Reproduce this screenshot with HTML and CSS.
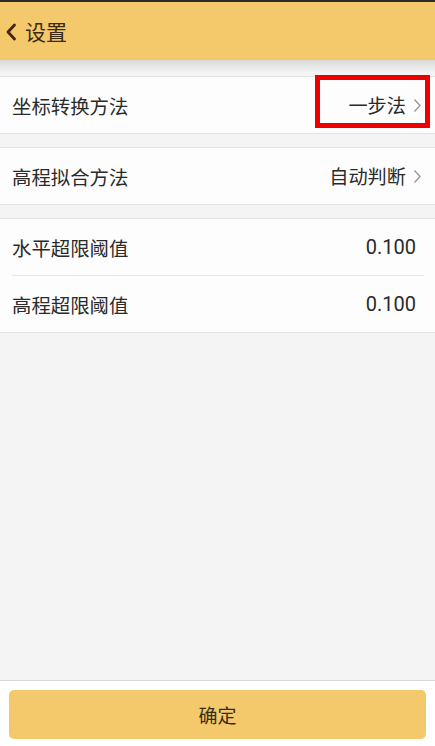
FILE: index.html
```html
<!DOCTYPE html>
<html lang="zh">
<head>
<meta charset="utf-8">
<title>设置</title>
<link rel="stylesheet" href="styles.css">
</head>
<body>
<div class="page">
  <header class="header">
    <svg class="back" width="12" height="18" viewBox="0 0 12 18"><path d="M9.5 2 L3 9 L9.5 16" fill="none" stroke="#4a2608" stroke-width="2.8" stroke-linecap="round" stroke-linejoin="round"/></svg>
    <span class="title">设置</span>
  </header>
  <div class="shade"></div>
  <main class="content">
    <section class="group">
      <div class="row">
        <span class="label">坐标转换方法</span>
        <span class="value">一步法<svg class="chev" width="9" height="15" viewBox="0 0 9 15"><path d="M1.5 1.5 L7 7.5 L1.5 13.5" fill="none" stroke="#9a9a9a" stroke-width="1.4"/></svg></span>
        <div class="mark"></div>
      </div>
    </section>
    <section class="group">
      <div class="row">
        <span class="label">高程拟合方法</span>
        <span class="value">自动判断<svg class="chev" width="9" height="15" viewBox="0 0 9 15"><path d="M1.5 1.5 L7 7.5 L1.5 13.5" fill="none" stroke="#9a9a9a" stroke-width="1.4"/></svg></span>
      </div>
    </section>
    <section class="group">
      <div class="row">
        <span class="label">水平超限阈值</span>
        <span class="value num">0.100</span>
      </div>
      <div class="divider"></div>
      <div class="row">
        <span class="label">高程超限阈值</span>
        <span class="value num">0.100</span>
      </div>
    </section>
  </main>
  <footer class="footer">
    <button class="ok">确定</button>
  </footer>
</div>
</body>
</html>
```
FILE: styles.css
```css
html, body {
  margin: 0;
  padding: 0;
}
body {
  font-family: "Noto Sans CJK SC", "Noto Sans", sans-serif;
  background: #f4f4f4;
  color: #333;
}
.page {
  width: 435px;
  height: 746px;
  display: flex;
  flex-direction: column;
  overflow: hidden;
}
.header {
  height: 58px;
  border-top: 2px solid #2b2b2b;
  background: #f3c96c;
  display: flex;
  align-items: center;
  padding-left: 5px;
  gap: 8px;
}
.back {
  margin-top: 1px;
}
.title {
  font-size: 21px;
  color: #3a2a12;
  line-height: 1;
}
.shade {
  height: 16px;
  background: linear-gradient(#d9d9d9, #f4f4f4 80%);
}
.content {
  flex: 1;
  display: flex;
  flex-direction: column;
  gap: 13px;
}
.group {
  background: #fdfdfd;
  border-top: 1px solid #e2e2e2;
  border-bottom: 1px solid #e2e2e2;
}
.row {
  position: relative;
  height: 56px;
  display: flex;
  align-items: center;
  justify-content: space-between;
  padding: 0 19px 0 12px;
}
.label {
  font-size: 19.4px;
  color: #2a2a2a;
}
.value {
  font-size: 19.2px;
  color: #2a2a2a;
  display: flex;
  align-items: center;
  gap: 7px;
}
.row:has(.chev) {
  padding-right: 13px;
}
.num {
  font-family: "Roboto", "Noto Sans", sans-serif;
  font-size: 20px;
}
.chev {
  display: block;
}
.divider {
  height: 1px;
  background: #e6e6e6;
  margin: 0 11px 0 12px;
}
.mark {
  position: absolute;
  left: 315px;
  top: -2px;
  width: 105px;
  height: 43px;
  border: 5px solid #ee0000;
}
.footer {
  background: #fff;
  border-top: 1px solid #d8d8d8;
  padding: 9px 9px 7px;
}
.ok {
  display: block;
  width: 100%;
  height: 49px;
  border: none;
  border-radius: 5px;
  background: #f3c96c;
  font-family: "Noto Sans CJK SC", sans-serif;
  font-size: 19px;
  color: #3a2a12;
}
```
